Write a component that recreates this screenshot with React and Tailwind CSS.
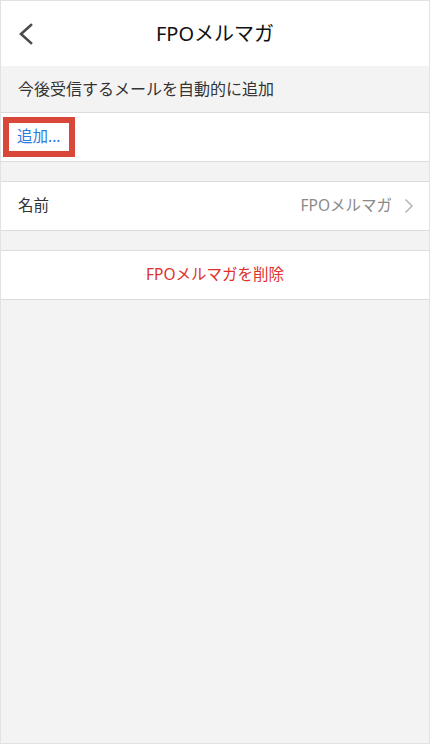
import React from "react";

const font = { fontFamily: '"Noto Sans", "Noto Sans CJK JP", sans-serif' };

export default function App() {
  return (
    <div
      className="w-[430px] h-[744px] bg-[#f3f3f3] border border-[#e2e2e2] flex flex-col overflow-hidden"
      style={font}
    >
      <div className="h-[65px] bg-white flex items-center relative shrink-0">
        <div className="absolute left-[16px] top-[22px]">
          <svg width="18" height="22" viewBox="0 0 18 22">
            <path d="M14 2 L4 11 L14 20" fill="none" stroke="#4a4a4a" strokeWidth="2.6" strokeLinecap="square" />
          </svg>
        </div>
        <div className="flex-1 text-center text-[20px] text-[#111] leading-none">FPOメルマガ</div>
      </div>
      <div className="h-[46px] flex items-center px-[17px] text-[16px] text-[#333] shrink-0">
        今後受信するメールを自動的に追加
      </div>
      <div className="h-[50px] bg-white border-y border-[#dcdcdc] flex items-center pl-[2px] shrink-0">
        <div className="border-[6px] border-[#d9473a] h-[40px] w-[72px] flex items-center pl-[8px] text-[15.5px] text-[#2b7ae0]">
          追加...
        </div>
      </div>
      <div className="h-[19px] shrink-0" />
      <div className="h-[50px] bg-white border-y border-[#dcdcdc] flex items-center pl-[17px] pr-[15px] shrink-0">
        <div className="flex-1 text-[15.5px] text-[#333]">名前</div>
        <div className="text-[15.5px] text-[#8a8a8a] mr-[12px]">FPOメルマガ</div>
        <svg width="10" height="16" viewBox="0 0 10 16">
          <path d="M1.5 1.5 L8 8 L1.5 14.5" fill="none" stroke="#b8b8b8" strokeWidth="1.6" />
        </svg>
      </div>
      <div className="h-[19px] shrink-0" />
      <div className="h-[50px] bg-white border-y border-[#dcdcdc] flex items-center justify-center text-[15.5px] text-[#e0302a] shrink-0">
        FPOメルマガを削除
      </div>
    </div>
  );
}
